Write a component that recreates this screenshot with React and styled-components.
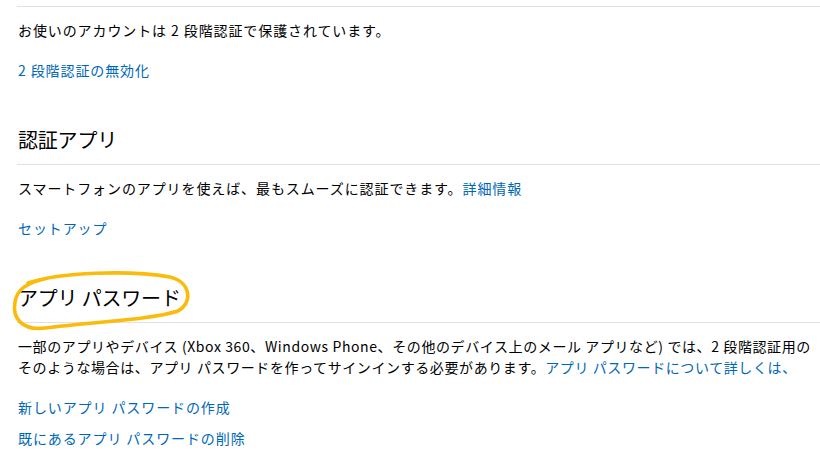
import React from "react";
import styled, { createGlobalStyle } from "styled-components";

const Global = createGlobalStyle`
  html, body { margin: 0; padding: 0; background: #ffffff; overflow: hidden; }
  body {
    font-family: "Noto Sans CJK JP", "Noto Sans", sans-serif;
    color: #000000;
  }
`;

const Page = styled.div`
  padding-left: 18px;
  height: 460px;
  overflow: hidden;
`;

const Rule = styled.hr`
  margin: 6px 0 0 -1px;
  border: 0;
  border-top: 1px solid #e1e1e1;
`;

const Section = styled.section`
  margin-top: ${(p) => (p.$first ? "0" : "45px")};
`;

const TitleWrap = styled.div`
  position: relative;
`;

const Title = styled.h2`
  margin: 0 0 0 -1px;
  padding: 0 0 10px 1px;
  font-size: 20px;
  line-height: 28px;
  font-weight: 400;
  letter-spacing: -0.2px;
  border-bottom: 1px solid #e1e1e1;
`;

const Text = styled.p`
  margin: 13px 0 0;
  font-size: 14px;
  line-height: 21px;
  white-space: nowrap;
  letter-spacing: ${(p) => p.$spacing || "0.9px"};
`;

const Link = styled.a`
  color: #0067b8;
  text-decoration: none;
  cursor: pointer;
`;

const LinkList = styled.div`
  margin-top: 19px;
  display: flex;
  flex-direction: column;
  align-items: flex-start;
  gap: 10px;
  font-size: 14px;
  line-height: 21px;
  letter-spacing: 0.9px;
`;

const Marker = styled.svg`
  position: absolute;
  left: -10px;
  top: -16px;
  pointer-events: none;
  overflow: visible;
`;

export default function App() {
  return (
    <>
      <Global />
      <Page>
        <Section $first>
          <Rule />
          <Text>お使いのアカウントは 2 段階認証で保護されています。</Text>
          <LinkList>
            <Link>2 段階認証の無効化</Link>
          </LinkList>
        </Section>

        <Section>
          <Title>認証アプリ</Title>
          <Text>
            スマートフォンのアプリを使えば、最もスムーズに認証できます。<Link>詳細情報</Link>
          </Text>
          <LinkList>
            <Link>セットアップ</Link>
          </LinkList>
        </Section>

        <Section>
          <TitleWrap>
            <Title>アプリ パスワード</Title>
            <Marker width="188" height="66" viewBox="8 268 188 66">
              <path
                d="M 28 283 C 60 272, 130 270, 170 277 C 191 282, 193 303, 178 311 C 150 320, 90 322, 45 328 C 22 331, 12 318, 15 302 C 17 290, 25 283, 48 278"
                fill="none"
                stroke="#fabb0c"
                strokeWidth="3.6"
                strokeLinecap="round"
                strokeLinejoin="round"
              />
            </Marker>
          </TitleWrap>
          <Text $spacing="0.6px">
            一部のアプリやデバイス (Xbox 360、Windows Phone、その他のデバイス上のメール アプリなど) では、2 段階認証用の
            <br />
            そのような場合は、アプリ パスワードを作ってサインインする必要があります。<Link>アプリ パスワードについて詳しくは、</Link>
          </Text>
          <LinkList>
            <Link>新しいアプリ パスワードの作成</Link>
            <Link>既にあるアプリ パスワードの削除</Link>
          </LinkList>
        </Section>
      </Page>
    </>
  );
}
